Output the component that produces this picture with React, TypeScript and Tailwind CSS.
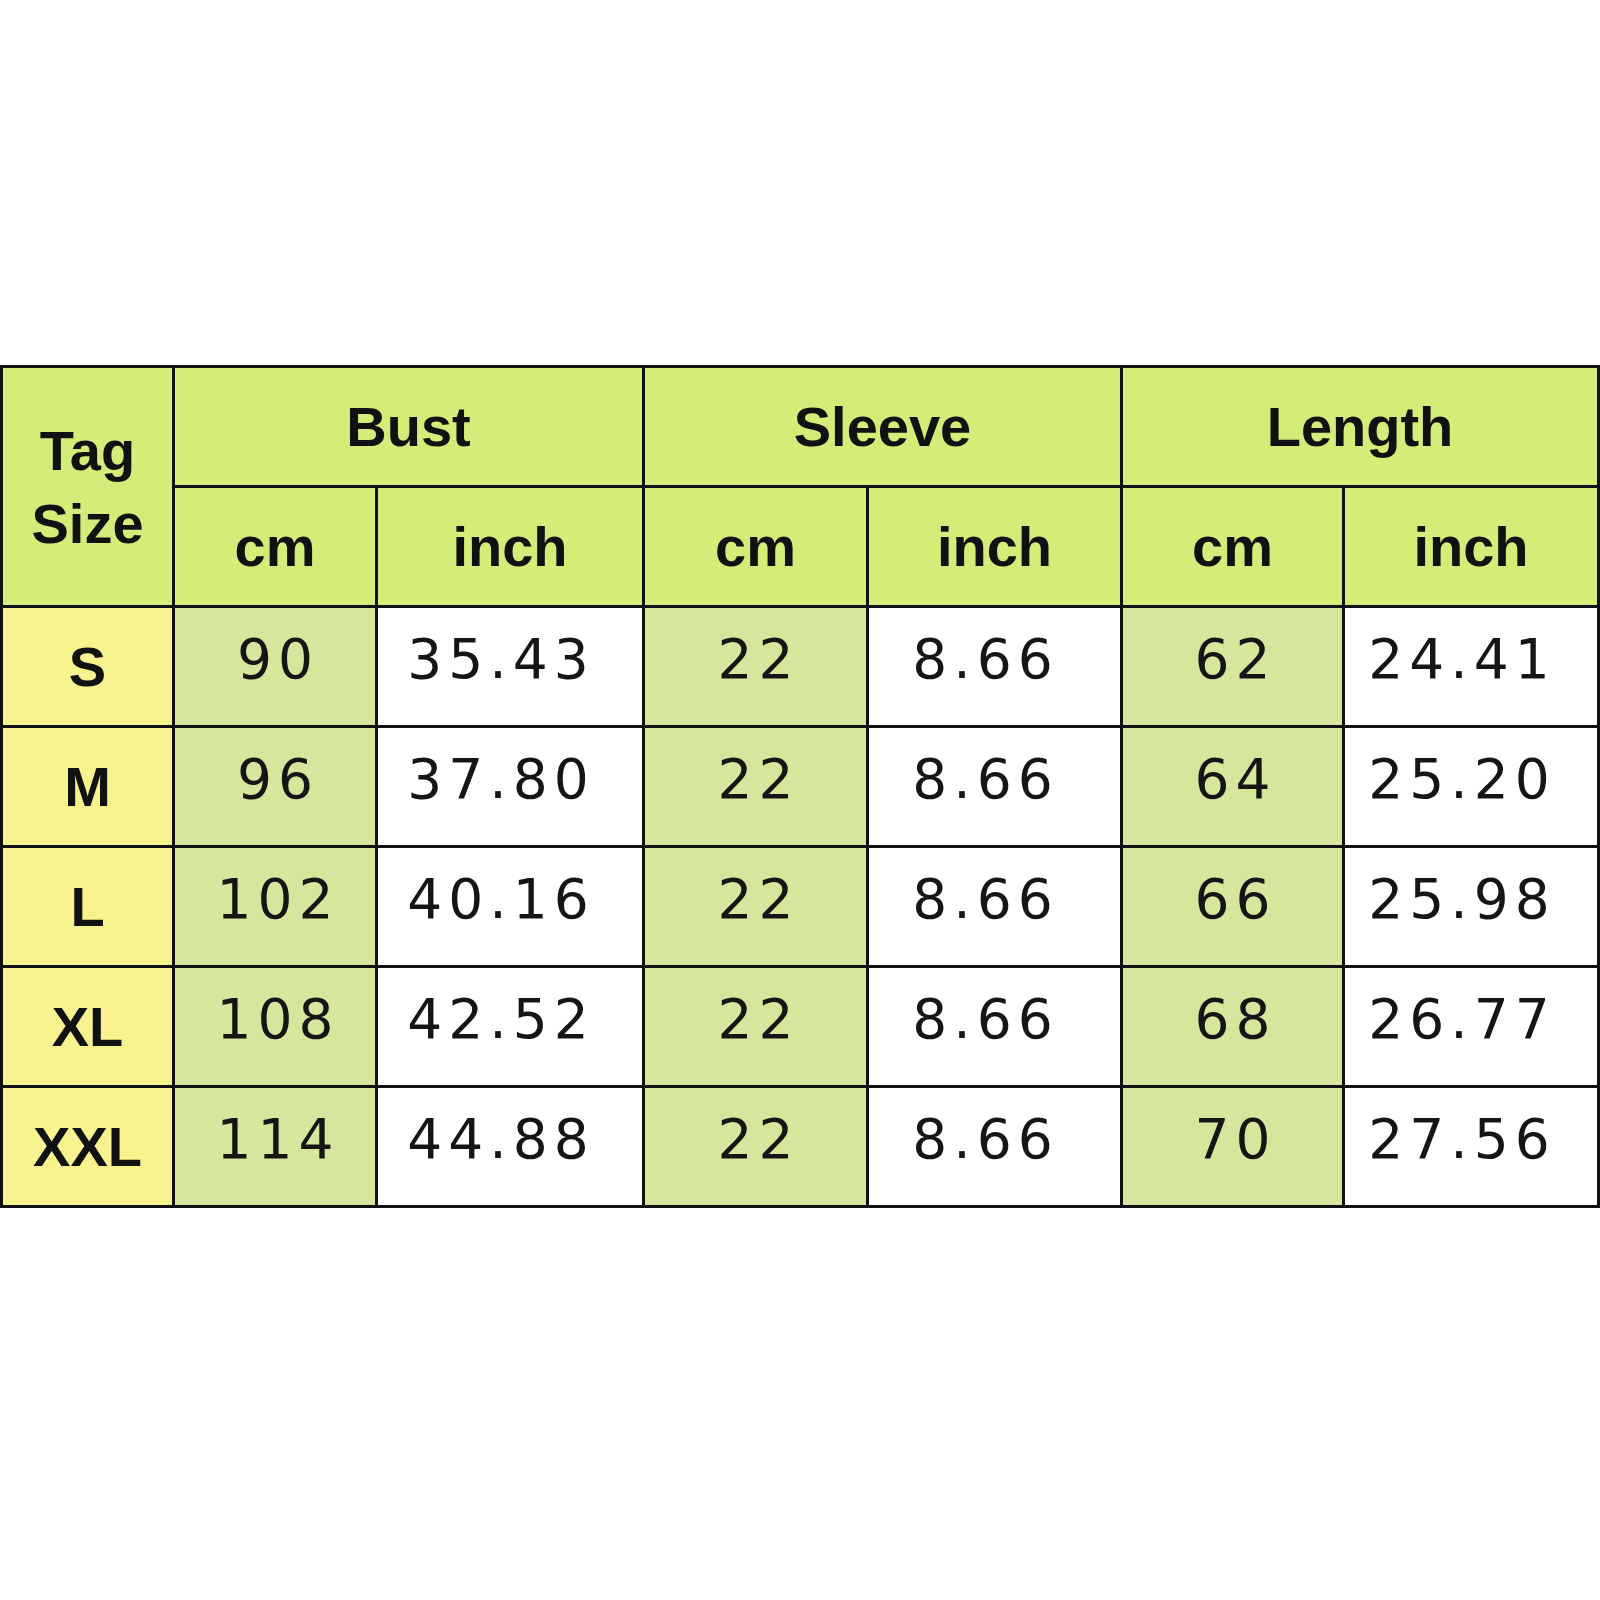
const rows = [
  { tag: 'S', bust: ['90', '35.43'], sleeve: ['22', '8.66'], length: ['62', '24.41'] },
  { tag: 'M', bust: ['96', '37.80'], sleeve: ['22', '8.66'], length: ['64', '25.20'] },
  { tag: 'L', bust: ['102', '40.16'], sleeve: ['22', '8.66'], length: ['66', '25.98'] },
  { tag: 'XL', bust: ['108', '42.52'], sleeve: ['22', '8.66'], length: ['68', '26.77'] },
  { tag: 'XXL', bust: ['114', '44.88'], sleeve: ['22', '8.66'], length: ['70', '27.56'] },
]

const head = "flex items-center justify-center bg-[#d4ec78] font-['Liberation_Sans',Arial,sans-serif] font-bold text-[56px] text-[#111]"
const num = "flex items-center justify-center pb-[14px] font-['DejaVu_Sans',sans-serif] text-[55px] tracking-[6px] text-[#151515]"

function DataRow({ row }: { row: (typeof rows)[number] }) {
  return (
    <>
      <div className="flex items-center justify-center bg-[#f8f38e] font-['Liberation_Sans',Arial,sans-serif] font-bold text-[56px] text-[#111]">
        {row.tag}
      </div>
      {[row.bust, row.sleeve, row.length].map((pair, i) => (
        <div key={i} className="contents">
          <div className={`${num} bg-[#d7e69d] pl-[6px]`}>{pair[0]}</div>
          <div className={`${num} bg-white pr-[18px]`}>{pair[1]}</div>
        </div>
      ))}
    </>
  )
}

export default function App() {
  return (
    <div className="w-[1600px] h-[1600px] bg-white pt-[365px]">
      <div className="w-[1600px] grid grid-cols-[169px_200px_264px_221px_251px_219px_252px] grid-rows-[repeat(7,117px)] gap-[3px] p-[3px] bg-[#111]">
        <div className={`${head} row-span-2 flex-col leading-[73px]`}>
          <span>Tag</span>
          <span>Size</span>
        </div>
        <div className={`${head} col-span-2`}>Bust</div>
        <div className={`${head} col-span-2`}>Sleeve</div>
        <div className={`${head} col-span-2`}>Length</div>
        <div className={head}>cm</div>
        <div className={head}>inch</div>
        <div className={head}>cm</div>
        <div className={head}>inch</div>
        <div className={head}>cm</div>
        <div className={head}>inch</div>
        {rows.map((r) => (
          <DataRow key={r.tag} row={r} />
        ))}
      </div>
    </div>
  )
}
